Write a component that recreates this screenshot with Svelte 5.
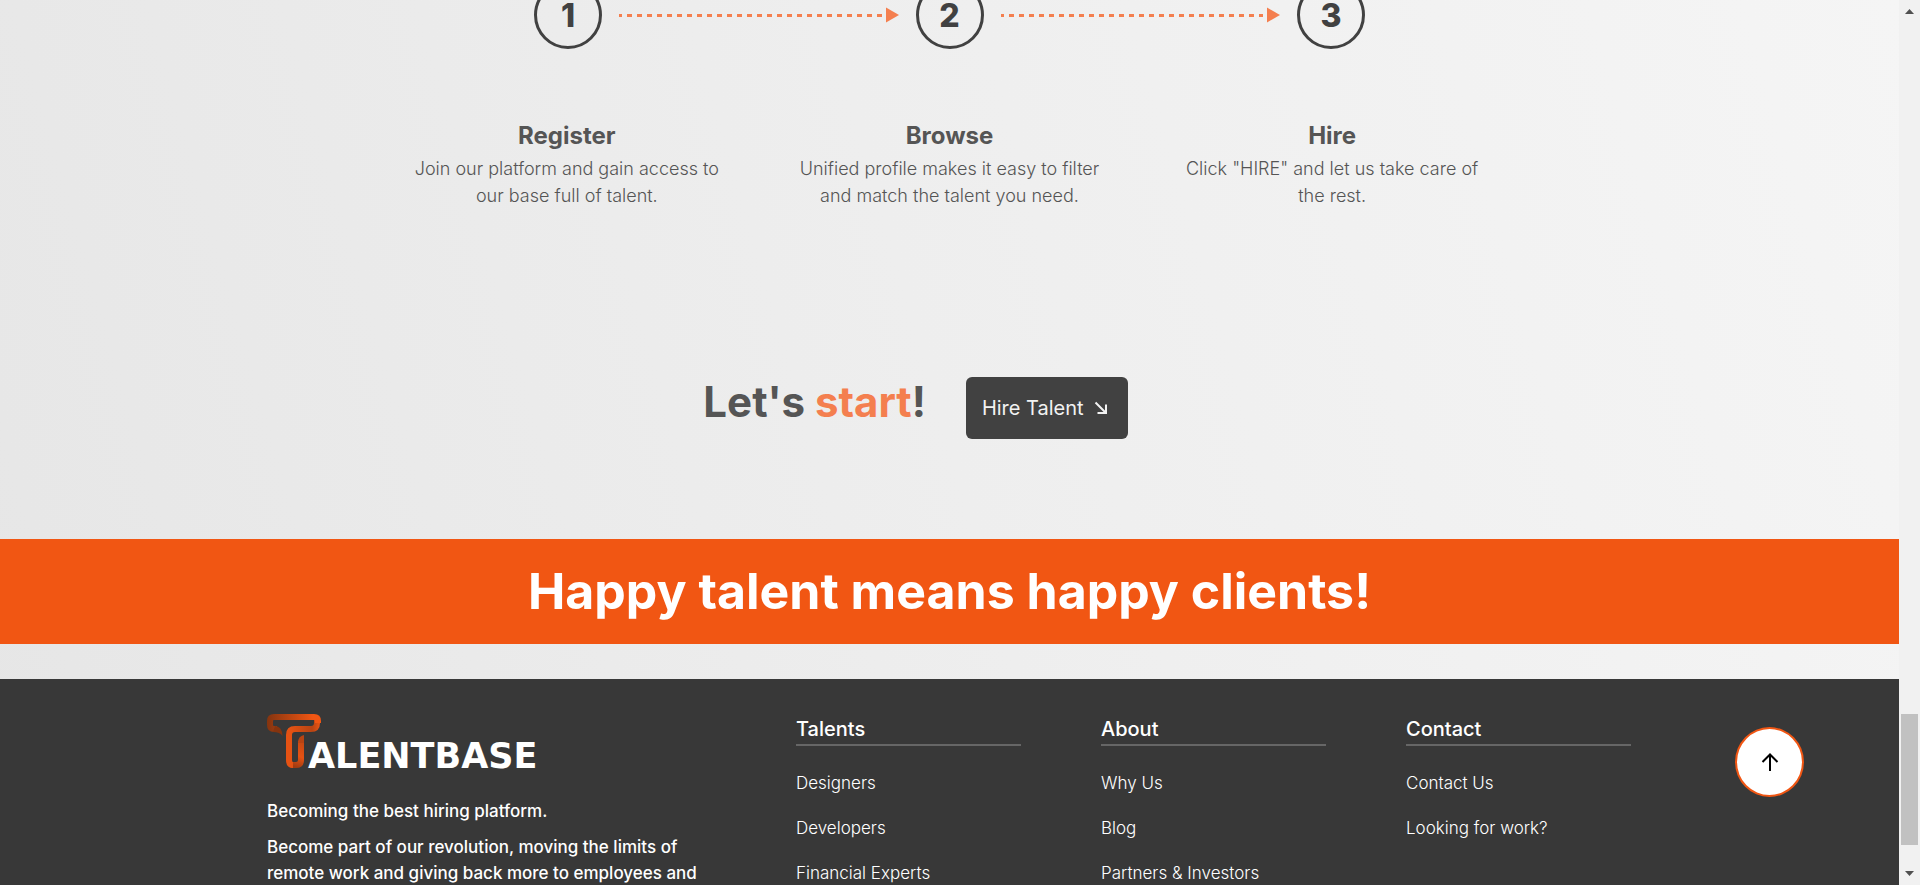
<script>
  const steps = [
    { title: 'Register', text: 'Join our platform and gain access to our base full of talent.' },
    { title: 'Browse', text: 'Unified profile makes it easy to filter and match the talent you need.' },
    { title: 'Hire', text: 'Click "HIRE" and let us take care of the rest.' }
  ];

  const columns = [
    { title: 'Talents', links: ['Designers', 'Developers', 'Financial Experts'] },
    { title: 'About', links: ['Why Us', 'Blog', 'Partners & Investors'] },
    { title: 'Contact', links: ['Contact Us', 'Looking for work?'] }
  ];
</script>

<div class="page">
  <div class="content">
    <main>
      <div class="track">
        {#each steps as step, i}
          {#if i > 0}
            <div class="arrow" aria-hidden="true">
              <span class="dashes"></span>
              <svg width="13" height="16" viewBox="0 0 13 16"><path d="M0 0.5 13 8 0 15.5Z" fill="#f47f4f" /></svg>
            </div>
          {/if}
          <div class="circle">{i + 1}</div>
        {/each}
      </div>

      <div class="steps">
        {#each steps as step}
          <section>
            <h3>{step.title}</h3>
            <p>{step.text}</p>
          </section>
        {/each}
      </div>

      <div class="cta">
        <h2>Let's <span>start</span>!</h2>
        <button type="button" class="hire">
          Hire Talent
          <svg width="14" height="14" viewBox="0 0 14 14" fill="none" stroke="#f2f2f2" stroke-width="2">
            <path d="M1.5 1.5 12 12M12 3.5V12H3.5" />
          </svg>
        </button>
      </div>
    </main>

    <div class="banner">Happy talent means happy clients!</div>

    <footer>
      <div class="inner">
        <div class="about">
          <a class="logo" href="#top" aria-label="Talentbase">
            <svg width="54" height="54" viewBox="0 0 54 54" fill="none" stroke-width="6" aria-hidden="true">
              <defs>
                <linearGradient id="bar" gradientUnits="userSpaceOnUse" x1="0" y1="0" x2="46" y2="0">
                  <stop offset="0" stop-color="#84340f" />
                  <stop offset="1" stop-color="#f15613" />
                </linearGradient>
                <linearGradient id="fold" gradientUnits="userSpaceOnUse" x1="24" y1="0" x2="54" y2="0">
                  <stop offset="0" stop-color="#e55213" />
                  <stop offset="0.7" stop-color="#b84413" />
                  <stop offset="1" stop-color="#f15613" />
                </linearGradient>
                <linearGradient id="stem" gradientUnits="userSpaceOnUse" x1="26" y1="52" x2="38" y2="22">
                  <stop offset="0" stop-color="#a03b11" />
                  <stop offset="0.35" stop-color="#e55213" />
                  <stop offset="1" stop-color="#b84413" />
                </linearGradient>
              </defs>
              <path d="M24 51H29Q34 51 34 46V27" stroke="url(#stem)" />
              <path d="M31 29Q31 22 37 21V29Z" fill="#b84413" />
              <path d="M50 6V9Q50 15 44 15H28Q22 15 22 21V46Q22 51 26 51" stroke="url(#fold)" />
              <path d="M10 15H7Q3 15 3 11V7Q3 3 7 3H47Q51 3 51 7V9" stroke="url(#bar)" />
              <path d="M8 12Q15 12 15.500 22 13 18 6 18Z" fill="#84340f" />
            </svg>
            <span class="word">ALENTBASE</span>
          </a>
          <p>Becoming the best hiring platform.</p>
          <p>Become part of our revolution, moving the limits of remote work and giving back more to employees and</p>
        </div>
        {#each columns as column}
          <nav aria-label={column.title}>
            <h4>{column.title}</h4>
            <ul>
              {#each column.links as link}
                <li><a href="#top">{link}</a></li>
              {/each}
            </ul>
          </nav>
        {/each}
      </div>
    </footer>

    <button type="button" class="totop" aria-label="Back to top">
      <svg width="18" height="20" viewBox="0 0 18 20" fill="none" stroke="#000" stroke-width="2">
        <path d="M9 19V2M1.500 10 9 2.500 16.500 10" />
      </svg>
    </button>
  </div>

  <div class="scrollbar" aria-hidden="true">
    <svg width="9" height="5" viewBox="0 0 9 5"><path d="M4.500 0 9 5H0Z" fill="#505050" /></svg>
    <span class="thumb"></span>
    <svg width="9" height="5" viewBox="0 0 9 5"><path d="M0 0H9L4.500 5Z" fill="#505050" /></svg>
  </div>
</div>

<style>
  :global(body) {
    margin: 0;
    font-family: Inter, sans-serif;
    color: #555;
  }
  h2, h3, h4, p, ul {
    margin: 0;
    padding: 0;
  }
  button {
    font: inherit;
  }
  .page {
    display: flex;
    height: 100vh;
    overflow: hidden;
  }
  .content {
    position: relative;
    flex: 1;
    display: flex;
    flex-direction: column;
    overflow: hidden;
    background: linear-gradient(74deg, #e6e6e6, #eee 50%, #f5f5f5);
  }
  .track {
    display: flex;
    align-items: center;
    max-width: 831px;
    margin: -19px auto 0;
  }
  .circle {
    box-sizing: border-box;
    width: 68px;
    height: 68px;
    border: 3px solid #414141;
    border-radius: 50%;
    font-size: 32px;
    line-height: 64px;
    font-weight: 800;
    text-align: center;
    color: #414141;
  }
  .arrow {
    flex: 1;
    display: flex;
    align-items: center;
    margin: 0 17px;
  }
  .dashes {
    flex: 1;
    height: 3px;
    margin-right: 4px;
    background: repeating-linear-gradient(90deg, #f47f4f 0 3px, transparent 3px 8px, #f47f4f 8px 10px);
  }
  .steps {
    display: grid;
    grid-template-columns: repeat(3, 1fr);
    gap: 70px;
    max-width: 1078px;
    margin: 72px auto 0;
    text-align: center;
  }
  .steps h3 {
    font-size: 24px;
    line-height: 30px;
    font-weight: 700;
  }
  .steps p {
    font-size: 18px;
    line-height: 27px;
    font-weight: 300;
    padding-top: 4px;
  }
  .cta {
    display: flex;
    align-items: center;
    justify-content: center;
    gap: 40px;
    margin: 168px 68px 100px 0;
  }
  .cta h2 {
    font-size: 42px;
    line-height: 50px;
    padding-bottom: 12px;
    font-weight: 700;
  }
  .cta h2 span {
    color: #f47f4f;
  }
  .hire {
    display: flex;
    align-items: center;
    gap: 10px;
    height: 62px;
    padding: 0 20px 0 16px;
    border: 0;
    border-radius: 6px;
    background: #414141;
    color: #f2f2f2;
    font-size: 20px;
  }
  .banner {
    background: #f15613;
    color: #fff;
    font-size: 50px;
    line-height: 105px;
    font-weight: 700;
    text-align: center;
  }
  footer {
    flex: 1;
    margin-top: 35px;
    background: #383838;
    color: #fff;
  }
  .inner {
    display: grid;
    grid-template-columns: 1fr repeat(3, 225px);
    gap: 80px;
    max-width: 1364px;
    margin: 0 auto;
    padding: 35px 1px 0 0;
  }
  .logo {
    display: flex;
    align-items: flex-end;
    height: 54px;
    margin-bottom: 30px;
    color: #fff;
    text-decoration: none;
  }
  .word {
    margin-left: -13px;
    font-family: "DejaVu Sans", sans-serif;
    font-size: 35px;
    line-height: 24px;
    font-weight: 700;
  }
  .about p {
    font-size: 17px;
    line-height: 26px;
    font-weight: 500;
    margin-bottom: 10px;
  }
  nav h4 {
    font-size: 20px;
    line-height: 30px;
    font-weight: 500;
    border-bottom: 2px solid #666;
  }
  nav ul {
    list-style: none;
    padding-top: 24px;
  }
  nav li {
    font-size: 17px;
    line-height: 26px;
    margin-bottom: 19px;
  }
  nav a {
    color: #fff;
    font-weight: 300;
    text-decoration: none;
  }
  .totop {
    position: absolute;
    right: 95px;
    bottom: 88px;
    display: grid;
    place-items: center;
    width: 69px;
    height: 70px;
    padding: 0;
    border: 2px solid #f15613;
    border-radius: 50%;
    background: #fff;
  }
  .scrollbar {
    box-sizing: border-box;
    display: flex;
    flex-direction: column;
    align-items: center;
    width: 21px;
    padding: 9px 2px;
    background: #f1f1f1;
  }
  .thumb {
    width: 17px;
    height: 131px;
    margin: auto 0 26px;
    background: #c1c1c1;
  }
</style>
